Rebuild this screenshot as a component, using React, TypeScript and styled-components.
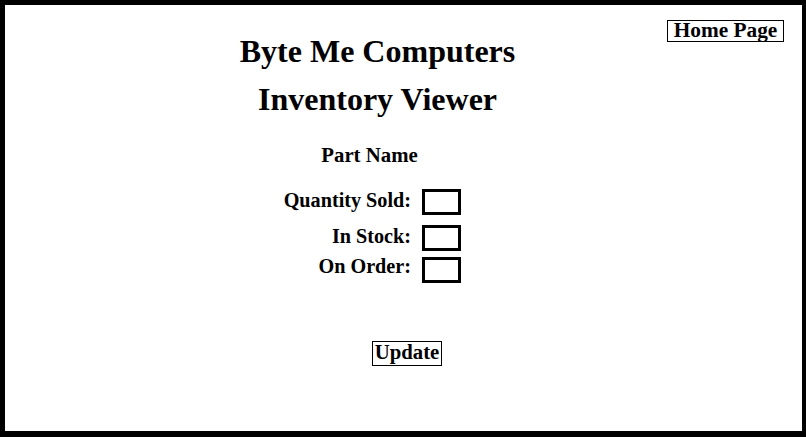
import React from "react";
import styled, { createGlobalStyle } from "styled-components";

const GlobalStyle = createGlobalStyle`
  html, body {
    margin: 0;
    padding: 0;
    background: #ffffff;
  }
  body {
    font-family: "Liberation Serif", "Times New Roman", serif;
    color: #000000;
  }
`;

const Frame = styled.div`
  box-sizing: border-box;
  width: 806px;
  height: 437px;
  border-style: solid;
  border-color: #000000;
  border-width: 5px 4px 6px 5px;
  background: #ffffff;
  display: grid;
  grid-template-columns: 1fr;
  grid-template-rows: 1fr;
`;

const Main = styled.main`
  grid-area: 1 / 1;
  width: 745px;
  padding-top: 22px;
  display: flex;
  flex-direction: column;
  align-items: center;
`;

const Corner = styled.nav`
  grid-area: 1 / 1;
  justify-self: end;
  align-self: start;
  margin-top: 15px;
  margin-right: 18px;
`;

const Title = styled.h1`
  margin: 0;
  font-size: 32px;
  line-height: 48px;
  font-weight: bold;
  white-space: nowrap;
`;

const PartName = styled.h2`
  margin: 20px 16px 0 0;
  font-size: 20.8px;
  line-height: 24px;
  font-weight: bold;
  white-space: nowrap;
`;

const Form = styled.div`
  align-self: stretch;
  margin-top: 22px;
  display: grid;
  grid-template-columns: 406px 39px;
  column-gap: 11px;
  row-gap: 6px;
  justify-content: start;
`;

const Label = styled.label<{ $lift: number }>`
  justify-self: end;
  margin-top: ${(p) => -p.$lift}px;
  font-size: 20.2px;
  line-height: 24px;
  font-weight: bold;
  white-space: nowrap;
`;

const Field = styled.input<{ $extra?: boolean }>`
  box-sizing: border-box;
  width: 39px;
  height: 26px;
  margin: 0 0 ${(p) => (p.$extra ? 4 : 0)}px 0;
  padding: 0;
  border: 3px solid #000000;
  border-radius: 0;
  background: #ffffff;
  outline: none;
`;

const BoxButton = styled.button<{ $w: number; $h: number; $pb: number; $fs: number }>`
  box-sizing: border-box;
  width: ${(p) => p.$w}px;
  height: ${(p) => p.$h}px;
  padding: 0 0 ${(p) => p.$pb}px 0;
  border: 1px solid #000000;
  border-radius: 0;
  background: #ffffff;
  color: #000000;
  font-family: "Liberation Serif", "Times New Roman", serif;
  font-size: ${(p) => p.$fs}px;
  font-weight: bold;
  line-height: 18px;
  white-space: nowrap;
  cursor: pointer;
`;

const UpdateWrap = styled.div`
  margin-top: 58px;
  margin-left: 59px;
`;

export default function App() {
  return (
    <>
      <GlobalStyle />
      <Frame>
        <Main>
          <Title>Byte Me Computers</Title>
          <Title>Inventory Viewer</Title>
          <PartName>Part Name</PartName>
          <Form>
            <Label $lift={1}>Quantity Sold:</Label>
            <Field $extra />
            <Label $lift={1}>In Stock:</Label>
            <Field />
            <Label $lift={3}>On Order:</Label>
            <Field />
          </Form>
          <UpdateWrap>
            <BoxButton $w={70} $h={25} $pb={3} $fs={20.8}>Update</BoxButton>
          </UpdateWrap>
        </Main>
        <Corner>
          <BoxButton $w={117} $h={22} $pb={2} $fs={21.3}>Home Page</BoxButton>
        </Corner>
      </Frame>
    </>
  );
}
